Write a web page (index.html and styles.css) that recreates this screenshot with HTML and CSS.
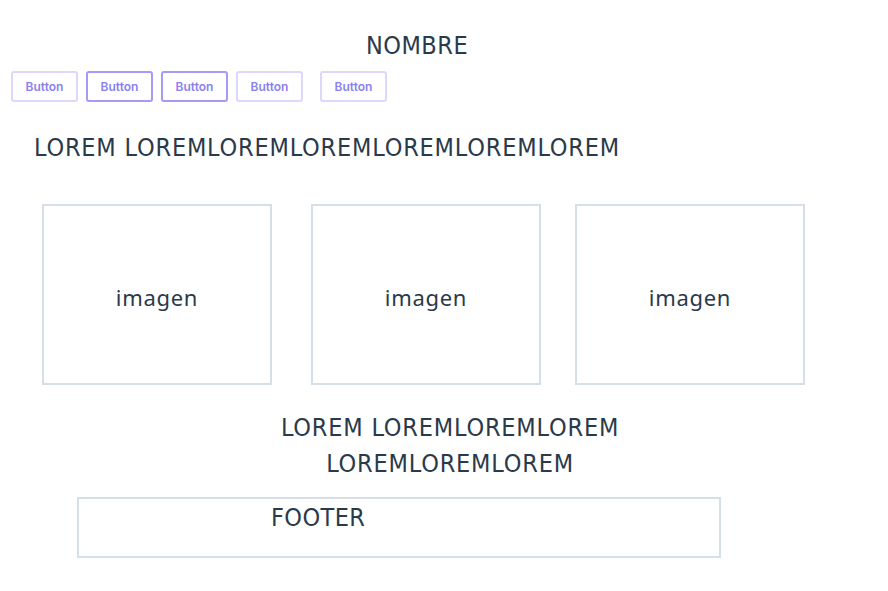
FILE: index.html
```html
<!DOCTYPE html>
<html lang="es">
<head>
<meta charset="utf-8">
<title>NOMBRE</title>
<link rel="stylesheet" href="styles.css">
</head>
<body>
<header class="header">
  <h1 class="title">NOMBRE</h1>
  <nav class="nav">
    <button class="btn">Button</button>
    <button class="btn btn-strong">Button</button>
    <button class="btn btn-strong">Button</button>
    <button class="btn">Button</button>
    <button class="btn btn-far">Button</button>
  </nav>
</header>
<main class="main">
  <p class="lead">LOREM LOREMLOREMLOREMLOREMLOREMLOREM</p>
  <section class="gallery">
    <div class="img-box box-1">imagen</div>
    <div class="img-box box-2">imagen</div>
    <div class="img-box box-3">imagen</div>
  </section>
  <p class="closing">LOREM LOREMLOREMLOREM<br>LOREMLOREMLOREM</p>
</main>
<footer class="footer">
  <span class="footer-text">FOOTER</span>
</footer>
</body>
</html>
```
FILE: styles.css
```css
* { box-sizing: border-box; }
html, body { margin: 0; padding: 0; background: #ffffff; }
body {
  width: 888px;
  height: 591px;
  overflow: hidden;
  color: #2b3a4a;
  font-family: "Liberation Sans Narrow", "DejaVu Sans Condensed", "Liberation Sans", sans-serif;
}
.header { padding-top: 31px; }
.title {
  margin: 0;
  font-weight: 400;
  font-size: 25px;
  line-height: 30px;
  letter-spacing: 0.5px;
  text-align: center;
  padding-right: 54px;
}
.nav {
  display: flex;
  margin-top: 10px;
  padding-left: 11px;
  gap: 8px;
}
.btn {
  width: 67px;
  height: 31px;
  padding: 0;
  background: #fff;
  border: 2px solid #dcd8fd;
  border-radius: 3px;
  color: #8a7ff0;
  font-family: Inter, Roboto, sans-serif;
  font-weight: 600;
  font-size: 12px;
}
.btn-strong { border-color: #a39bf6; }
.btn-far { margin-left: 9px; }
.main { padding: 0; }
.lead {
  margin: 0;
  margin-top: 30px;
  padding-left: 34px;
  font-size: 25px;
  line-height: 32px;
  letter-spacing: 0.8px;
}
.gallery {
  display: flex;
  margin-top: 40px;
  padding-left: 42px;
}
.img-box {
  width: 230px;
  height: 181px;
  border: 2px solid #d6dfe8;
  display: flex;
  align-items: center;
  justify-content: center;
  font-family: "Noto Sans", "Open Sans", sans-serif;
  font-size: 22px;
  color: #2b3a4a;
  letter-spacing: 0.7px;
  padding-top: 4px;
}
.box-2 { margin-left: 39px; }
.box-3 { margin-left: 34px; }
.closing {
  margin: 0;
  margin-top: 25px;
  text-align: center;
  padding-left: 12px;
  font-size: 25px;
  line-height: 36px;
  letter-spacing: 0.8px;
}
.footer {
  margin-top: 15px;
  margin-left: 77px;
  width: 644px;
  height: 61px;
  border: 2px solid #d6dfe8;
  padding-left: 192px;
  padding-top: 4px;
  font-size: 25px;
  line-height: 30px;
  letter-spacing: 0.4px;
}
```
